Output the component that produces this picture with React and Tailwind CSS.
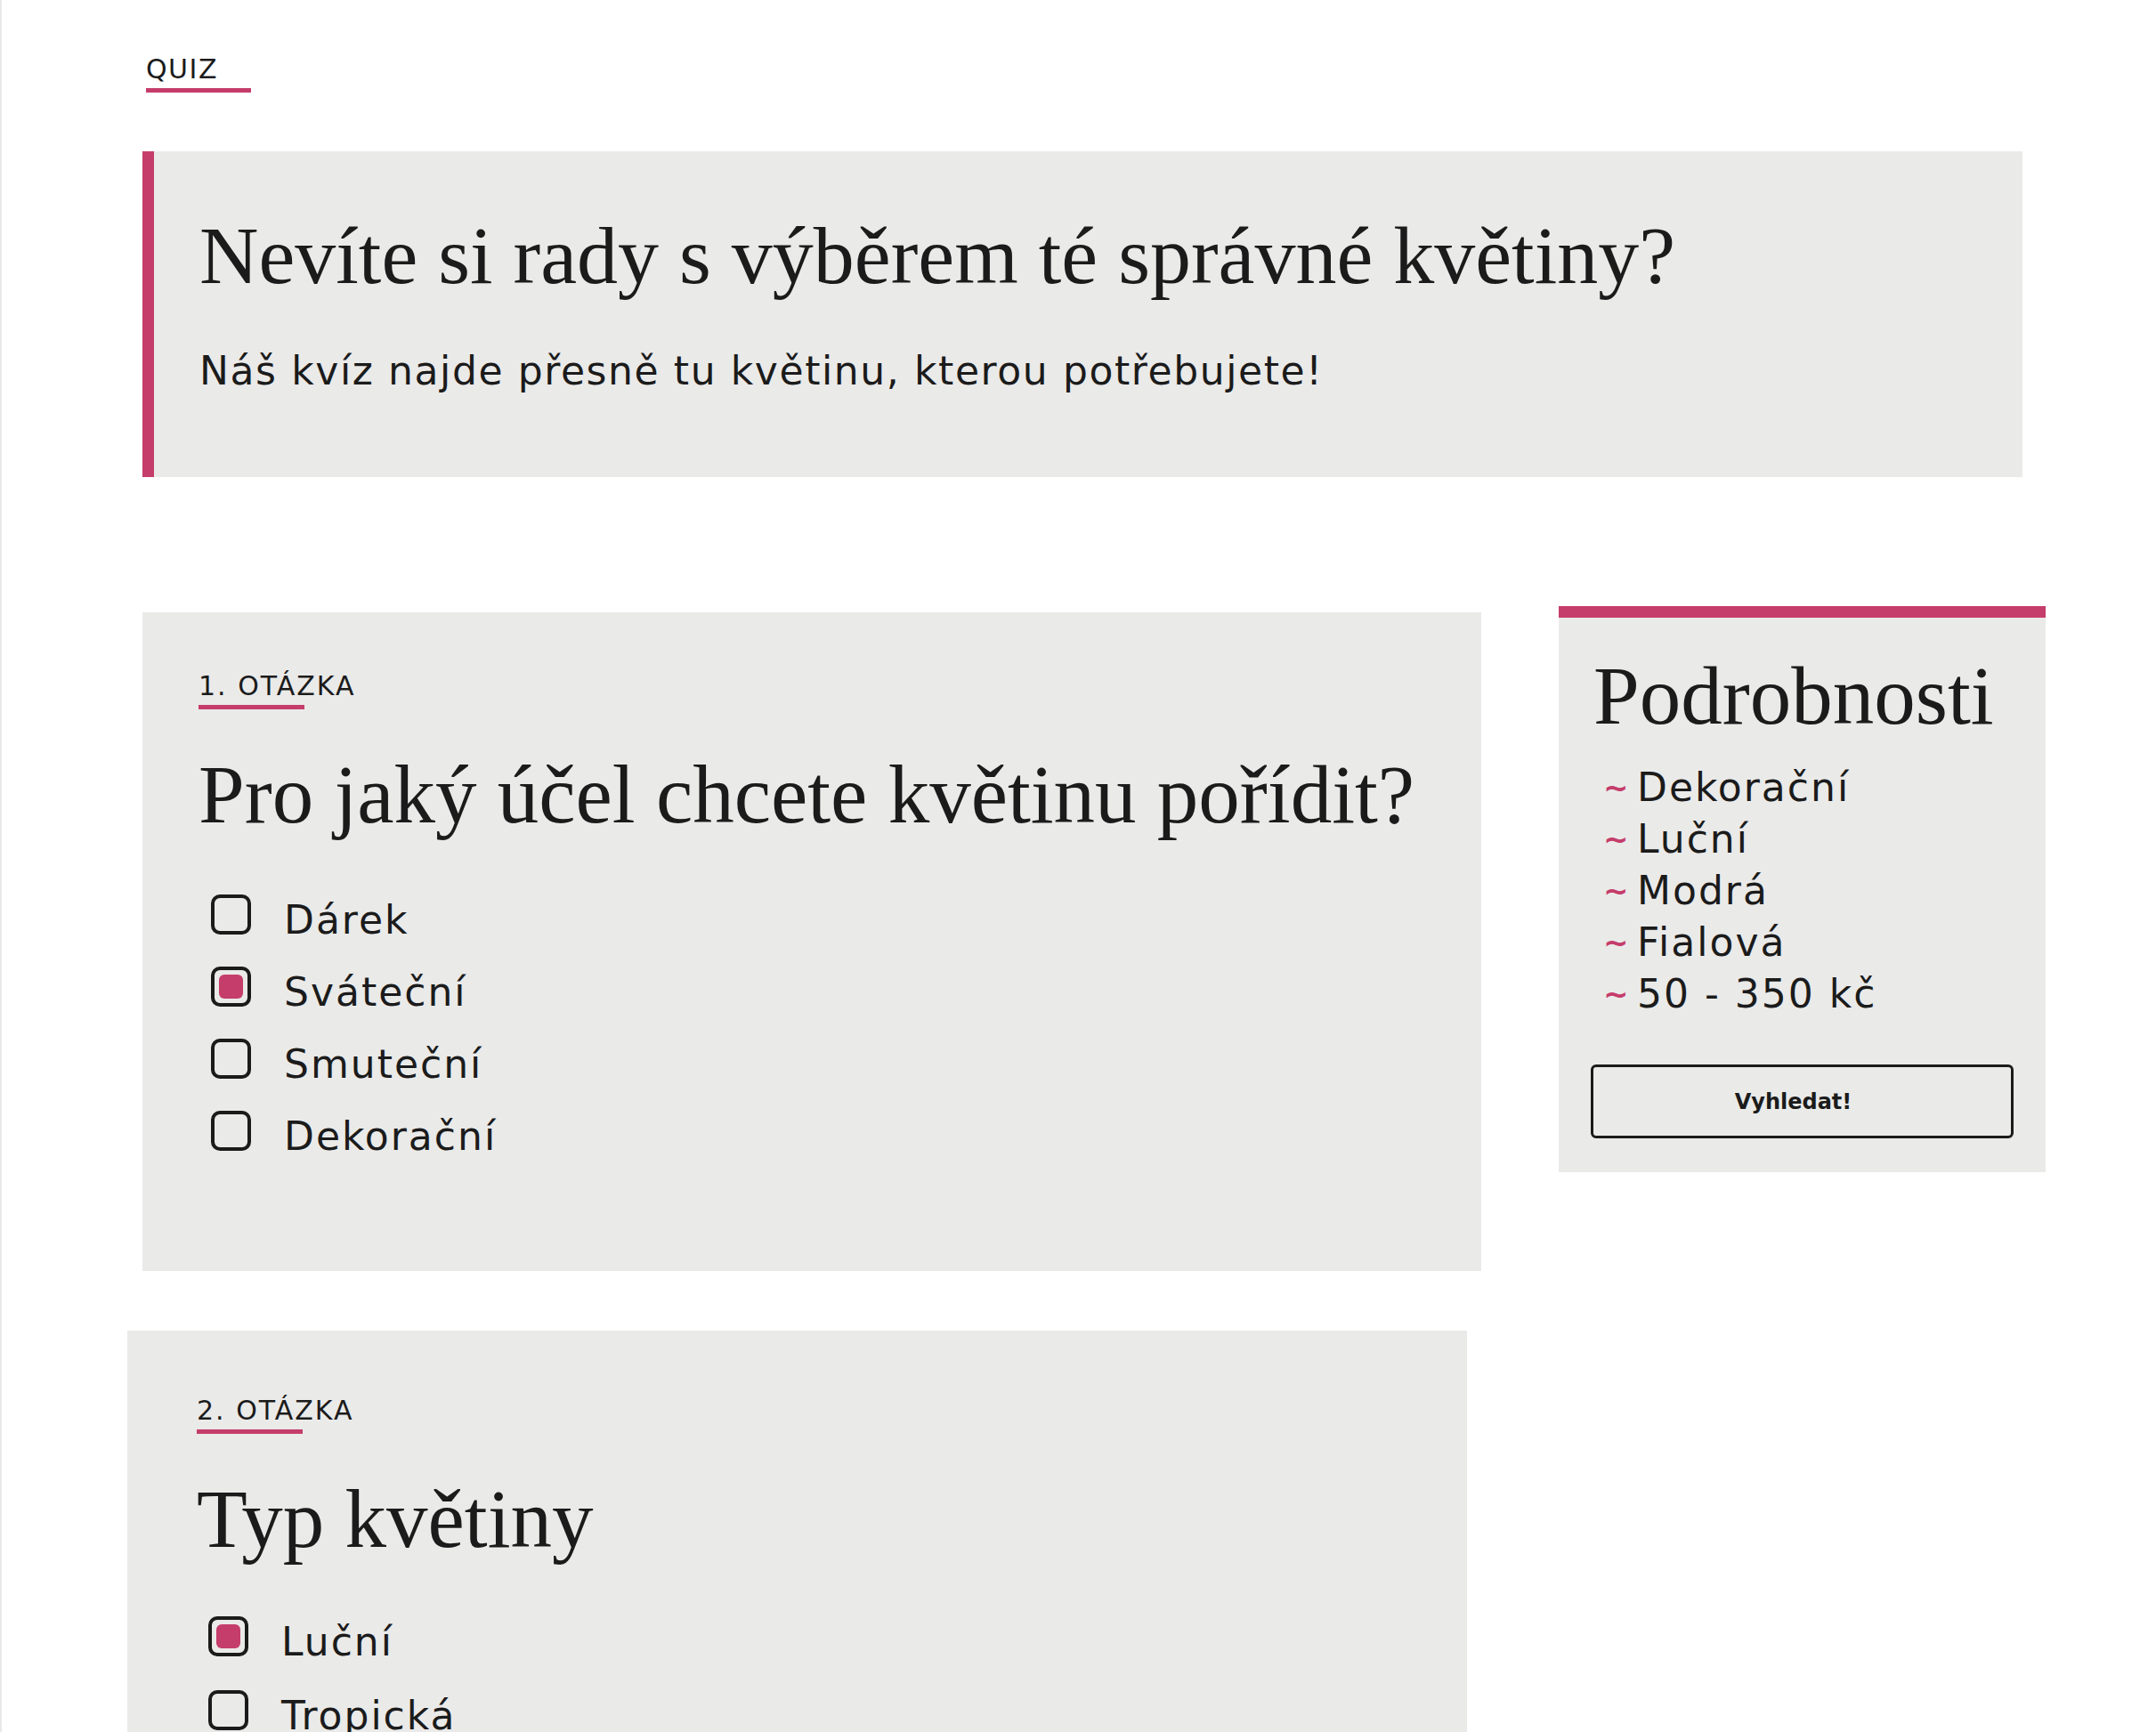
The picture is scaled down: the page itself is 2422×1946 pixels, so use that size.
const PINK = 'bg-[#c53d6b]'

const sans = "font-['DejaVu_Sans',sans-serif]"
const serif = "font-['Liberation_Serif',serif]"

function Checkbox({ checked }) {
  return (
    <div className="w-[45px] h-[45px] shrink-0 border-[4px] border-[#1b1b1b] rounded-[10px] flex items-center justify-center">
      {checked && <div className={`w-[27px] h-[27px] rounded-[6px] ${PINK}`} />}
    </div>
  )
}

function Option({ label, checked }) {
  return (
    <li className="flex items-start h-[45px]">
      <Checkbox checked={checked} />
      <span className={`ml-[37px] mt-[7px] ${sans} text-[44px] leading-none tracking-[2px]`}>{label}</span>
    </li>
  )
}

function Label({ children }) {
  return (
    <div>
      <p className={`${sans} text-[30px] leading-none tracking-[2px]`}>{children}</p>
      <div className={`mt-[6px] h-[5px] w-[119px] ${PINK}`} />
    </div>
  )
}

export default function App() {
  return (
    <div className="min-h-screen bg-white border-l-2 border-[#e9e9e9] text-[#1b1b1b] overflow-hidden">
      <div className="ml-[158px] w-[2138px] pt-[63px]">
        <header className="ml-[4px]">
          <p className={`${sans} text-[30px] leading-none tracking-[1.5px]`}>QUIZ</p>
          <div className={`mt-[6px] h-[5px] w-[118px] ${PINK}`} />
        </header>

        <section className="mt-[66px] w-[2112px] border-l-[13px] border-[#c53d6b] bg-[#eaeae9] pl-[51px] pt-[71px] pb-[97px]">
          <h1 className={`${serif} text-[92px] leading-none`}>Nevíte si rady s výběrem té správné květiny?</h1>
          <p className={`mt-[62px] ${sans} text-[44px] leading-none tracking-[1.6px]`}>
            Náš kvíz najde přesně tu květinu, kterou potřebujete!
          </p>
        </section>

        <div className="mt-[145px] flex items-start justify-between">
          <div className="w-[1504px] mt-[7px]">
            <div className="bg-[#eaeae9] pl-[63px] pt-[68px] pb-[135px]">
              <Label>1. OTÁZKA</Label>
              <h2 className={`mt-[49px] ${serif} text-[93px] leading-none`}>Pro jaký účel chcete květinu pořídit?</h2>
              <ul className="mt-[66px] ml-[14px] flex flex-col gap-[36px]">
                <Option label="Dárek" />
                <Option label="Sváteční" checked />
                <Option label="Smuteční" />
                <Option label="Dekorační" />
              </ul>
            </div>

            <div className="-ml-[17px] mt-[67px] w-[1505px] bg-[#eaeae9] pl-[78px] pt-[75px] pb-[135px]">
              <Label>2. OTÁZKA</Label>
              <h2 className={`mt-[49px] ${serif} text-[93px] leading-none`}>Typ květiny</h2>
              <ul className="mt-[63px] ml-[13px] flex flex-col gap-[38px]">
                <Option label="Luční" checked />
                <Option label="Tropická" />
                <Option label="Pokojová" />
              </ul>
            </div>
          </div>

          <aside className="w-[547px] border-t-[13px] border-[#c53d6b] bg-[#eaeae9] pt-[41px] pb-[38px]">
            <h3 className={`pl-[39px] ${serif} text-[93px] leading-none`}>Podrobnosti</h3>
            <ul className={`mt-[28px] pl-[50px] ${sans} text-[44px] leading-[58px] tracking-[2px]`}>
              {['Dekorační', 'Luční', 'Modrá', 'Fialová', '50 - 350 kč'].map((item) => (
                <li key={item}>
                  <span className="inline-block w-[38px] align-middle -mt-[6px] text-[34px] font-bold leading-none tracking-normal text-[#c53d6b]">~</span>
                  {item}
                </li>
              ))}
            </ul>
            <div className="mt-[50px] px-[36px]">
              <button className={`w-full h-[83px] pr-[20px] border-[3px] border-[#1b1b1b] rounded-[6px] ${sans} text-[24px] font-bold`}>
                Vyhledat!
              </button>
            </div>
          </aside>
        </div>
      </div>
    </div>
  )
}
